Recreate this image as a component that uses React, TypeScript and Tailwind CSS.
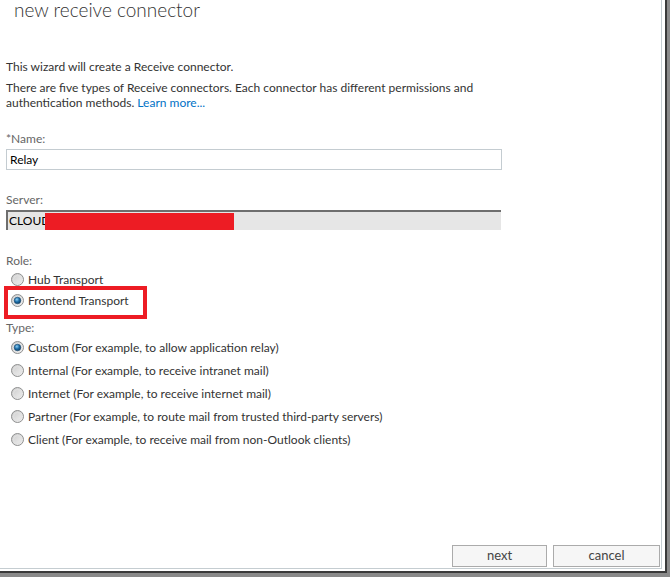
import React from 'react';

const roles = [
  { label: 'Hub Transport', checked: false },
  { label: 'Frontend Transport', checked: true },
];

const types = [
  { label: 'Custom (For example, to allow application relay)', checked: true },
  { label: 'Internal (For example, to receive intranet mail)', checked: false },
  { label: 'Internet (For example, to receive internet mail)', checked: false },
  { label: 'Partner (For example, to route mail from trusted third-party servers)', checked: false },
  { label: 'Client (For example, to receive mail from non-Outlook clients)', checked: false },
];

function Radio({ checked }: { checked: boolean }) {
  return (
    <svg width="13" height="13" viewBox="0 0 13 13" className="shrink-0">
      <defs>
        <linearGradient id="rbg" x1="0" y1="0" x2="1" y2="1">
          <stop offset="0" stopColor="#c9c9c9" />
          <stop offset="1" stopColor="#f4f4f4" />
        </linearGradient>
        <radialGradient id="rdot" cx="0.4" cy="0.35" r="0.7">
          <stop offset="0" stopColor="#8fd0f5" />
          <stop offset="0.5" stopColor="#1f6fa8" />
          <stop offset="1" stopColor="#0b3b62" />
        </radialGradient>
      </defs>
      <circle cx="6.5" cy="6.5" r="6" fill="url(#rbg)" stroke="#8e8f8f" strokeWidth="1" />
      <circle cx="6.5" cy="6.5" r="4" fill="none" stroke="#e2e2e2" strokeWidth="1" />
      {checked && <circle cx="6.5" cy="6.5" r="3.3" fill="url(#rdot)" stroke="#1d4a6e" strokeWidth="0.6" />}
    </svg>
  );
}

function Option({ label, checked }: { label: string; checked: boolean }) {
  return (
    <div className="flex items-center gap-[4px] h-[23px] pl-[11px]">
      <Radio checked={checked} />
      <span>{label}</span>
    </div>
  );
}

export default function App() {
  return (
    <div className="w-[670px] h-[577px] bg-[#8a8a8a] font-['Segoe_UI',Lato,sans-serif] text-[12px] text-[#333]">
      <div className="w-[667px] h-[573px] bg-white border-r-2 border-b-2 border-[#3a3a3a] flex flex-col">
        <div className="flex-1 flex flex-col border-r border-b border-[#c5cdd1] mr-[3px] mb-[2px]">
          {/* HEADER */}
          <h1 className="pl-[14px] text-[19px] font-light leading-[20px] text-[#333]">
            new receive connector
          </h1>

          {/* INTRO */}
          <div className="pl-[6px] mt-[39px] leading-[15px]">
            <p>This wizard will create a Receive connector.</p>
            <p className="mt-[6px]">
              There are five types of Receive connectors. Each connector has different permissions and
              <br />
              authentication methods. <span className="text-[#0072c6]">Learn more...</span>
            </p>
          </div>

          {/* NAME */}
          <div className="pl-[6px] mt-[21px]">
            <div className="text-[#666] leading-[15px]">*Name:</div>
            <div className="mt-[3px] w-[496px] h-[21px] border border-[#c4ccd1] flex items-center pl-[3px] text-black">
              Relay
            </div>
          </div>

          {/* SERVER */}
          <div className="pl-[6px] mt-[22px]">
            <div className="text-[#666] leading-[15px]">Server:</div>
            <div className="mt-[3px] w-[495px] h-[20px] bg-[#e6e6e6] border-t-2 border-l-2 border-[#6e6e6e] flex items-center pl-[1px] text-black">
              <span>CLOUD</span>
              <span className="-ml-[5px] w-[189px] h-[17px] bg-[#ed1c24]" />
            </div>
          </div>

          {/* ROLE */}
          <div className="mt-[23px]">
            <div className="pl-[6px] text-[#666] leading-[15px]">Role:</div>
            <Option {...roles[0]} />
            <div className="ml-[4px] w-[143px] border-4 border-[#ed1c24] -mt-[5px]">
              <div className="flex items-center gap-[4px] h-[21px] mb-[4px] pl-[3px]">
                <Radio checked />
                <span>Frontend Transport</span>
              </div>
            </div>
          </div>

          {/* TYPE */}
          <div className="mt-[1px]">
            <div className="pl-[6px] text-[#666] leading-[15px]">Type:</div>
            <div className="mt-[1px]">
              {types.map((t) => (
                <Option key={t.label} label={t.label} checked={t.checked} />
              ))}
            </div>
          </div>

          {/* FOOTER */}
          <div className="mt-auto flex justify-end gap-[6px] pr-[1px] pb-[1px]">
            <button className="w-[95px] h-[22px] border border-[#ababab] bg-[#f6f6f6] text-[13px] text-[#444]">
              next
            </button>
            <button className="w-[107px] h-[22px] border border-[#ababab] bg-[#f6f6f6] text-[13px] text-[#444]">
              cancel
            </button>
          </div>
        </div>
      </div>
    </div>
  );
}
